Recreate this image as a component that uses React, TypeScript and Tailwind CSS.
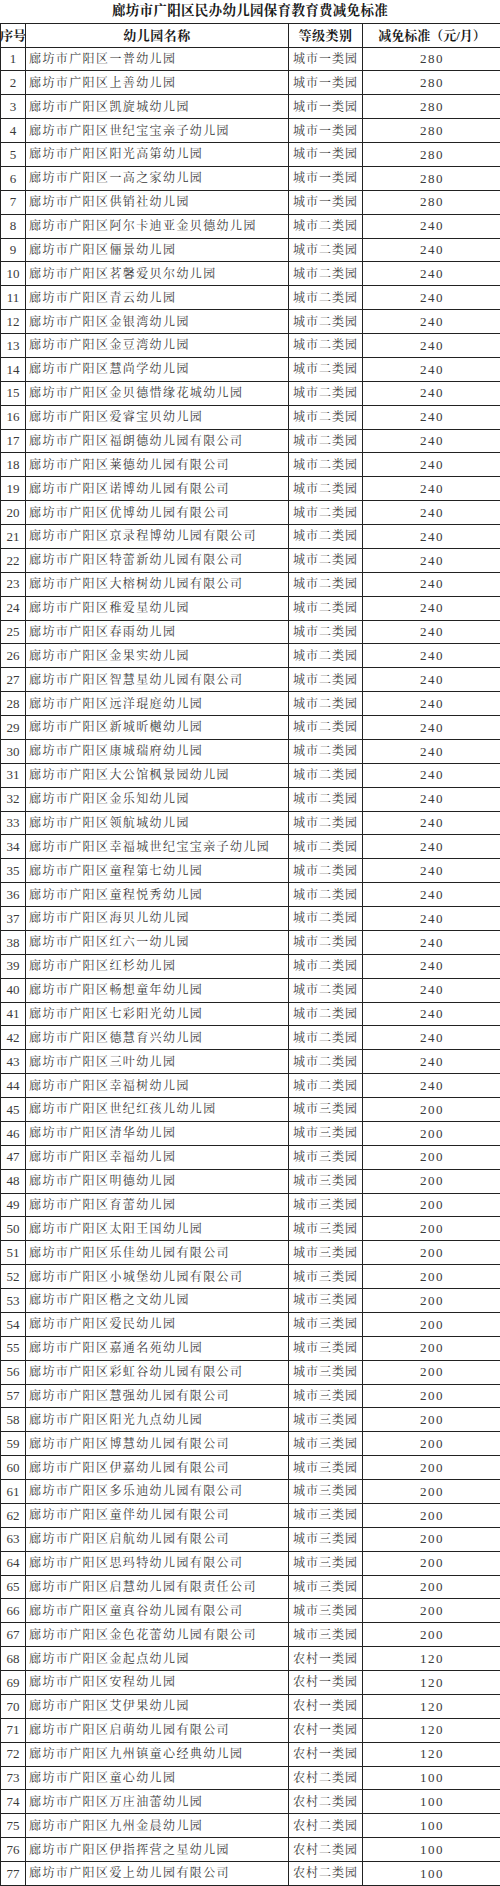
const rows: [string, string, number][] = [
  ["一普幼儿园", "城市一类园", 280],
  ["上善幼儿园", "城市一类园", 280],
  ["凯旋城幼儿园", "城市一类园", 280],
  ["世纪宝宝亲子幼儿园", "城市一类园", 280],
  ["阳光高第幼儿园", "城市一类园", 280],
  ["一高之家幼儿园", "城市一类园", 280],
  ["供销社幼儿园", "城市一类园", 280],
  ["阿尔卡迪亚金贝德幼儿园", "城市二类园", 240],
  ["俪景幼儿园", "城市二类园", 240],
  ["茗馨爱贝尔幼儿园", "城市二类园", 240],
  ["青云幼儿园", "城市二类园", 240],
  ["金银湾幼儿园", "城市二类园", 240],
  ["金豆湾幼儿园", "城市二类园", 240],
  ["慧尚学幼儿园", "城市二类园", 240],
  ["金贝德惜缘花城幼儿园", "城市二类园", 240],
  ["爱睿宝贝幼儿园", "城市二类园", 240],
  ["福朗德幼儿园有限公司", "城市二类园", 240],
  ["莱德幼儿园有限公司", "城市二类园", 240],
  ["诺博幼儿园有限公司", "城市二类园", 240],
  ["优博幼儿园有限公司", "城市二类园", 240],
  ["京录程博幼儿园有限公司", "城市二类园", 240],
  ["特蕾新幼儿园有限公司", "城市二类园", 240],
  ["大榕树幼儿园有限公司", "城市二类园", 240],
  ["稚爱星幼儿园", "城市二类园", 240],
  ["春雨幼儿园", "城市二类园", 240],
  ["金果实幼儿园", "城市二类园", 240],
  ["智慧星幼儿园有限公司", "城市二类园", 240],
  ["远洋琨庭幼儿园", "城市二类园", 240],
  ["新城昕樾幼儿园", "城市二类园", 240],
  ["康城瑞府幼儿园", "城市二类园", 240],
  ["大公馆枫景园幼儿园", "城市二类园", 240],
  ["金乐知幼儿园", "城市二类园", 240],
  ["领航城幼儿园", "城市二类园", 240],
  ["幸福城世纪宝宝亲子幼儿园", "城市二类园", 240],
  ["童程第七幼儿园", "城市二类园", 240],
  ["童程悦秀幼儿园", "城市二类园", 240],
  ["海贝儿幼儿园", "城市二类园", 240],
  ["红六一幼儿园", "城市二类园", 240],
  ["红杉幼儿园", "城市二类园", 240],
  ["畅想童年幼儿园", "城市二类园", 240],
  ["七彩阳光幼儿园", "城市二类园", 240],
  ["德慧育兴幼儿园", "城市二类园", 240],
  ["三叶幼儿园", "城市二类园", 240],
  ["幸福树幼儿园", "城市二类园", 240],
  ["世纪红孩儿幼儿园", "城市三类园", 200],
  ["清华幼儿园", "城市三类园", 200],
  ["幸福幼儿园", "城市三类园", 200],
  ["明德幼儿园", "城市三类园", 200],
  ["育蕾幼儿园", "城市三类园", 200],
  ["太阳王国幼儿园", "城市三类园", 200],
  ["乐佳幼儿园有限公司", "城市三类园", 200],
  ["小城堡幼儿园有限公司", "城市三类园", 200],
  ["楷之文幼儿园", "城市三类园", 200],
  ["爱民幼儿园", "城市三类园", 200],
  ["嘉通名苑幼儿园", "城市三类园", 200],
  ["彩虹谷幼儿园有限公司", "城市三类园", 200],
  ["慧强幼儿园有限公司", "城市三类园", 200],
  ["阳光九点幼儿园", "城市三类园", 200],
  ["博慧幼儿园有限公司", "城市三类园", 200],
  ["伊嘉幼儿园有限公司", "城市三类园", 200],
  ["多乐迪幼儿园有限公司", "城市三类园", 200],
  ["童伴幼儿园有限公司", "城市三类园", 200],
  ["启航幼儿园有限公司", "城市三类园", 200],
  ["思玛特幼儿园有限公司", "城市三类园", 200],
  ["启慧幼儿园有限责任公司", "城市三类园", 200],
  ["童真谷幼儿园有限公司", "城市三类园", 200],
  ["金色花蕾幼儿园有限公司", "城市三类园", 200],
  ["金起点幼儿园", "农村一类园", 120],
  ["安程幼儿园", "农村一类园", 120],
  ["艾伊果幼儿园", "农村一类园", 120],
  ["启萌幼儿园有限公司", "农村一类园", 120],
  ["九州镇童心经典幼儿园", "农村一类园", 120],
  ["童心幼儿园", "农村二类园", 100],
  ["万庄油蕾幼儿园", "农村二类园", 100],
  ["九州金晨幼儿园", "农村二类园", 100],
  ["伊指挥营之星幼儿园", "农村二类园", 100],
  ["爱上幼儿园有限公司", "农村二类园", 100],
];

const font = {
  fontFamily: '"Liberation Serif", "Noto Serif CJK SC", "Noto Sans CJK SC", serif',
};

export default function App() {
  return (
    <div className="w-[500px] overflow-hidden bg-white text-[#3a3a3a]" style={font}>
      {/* title */}
      <div className="flex h-[23px] items-center justify-center text-[13.5px] font-bold tracking-[0.3px] text-[#1a1a1a]">
        廊坊市广阳区民办幼儿园保育教育费减免标准
      </div>

      <div className="border-l border-t border-[#222]">
        {/* header */}
        <div className="grid h-[23.5px] grid-cols-[25px_263px_74px_138px] border-b border-[#222] text-[13px] font-bold text-[#1a1a1a]">
          <div className="flex items-center justify-center overflow-visible whitespace-nowrap border-r border-[#222]">
            序号
          </div>
          <div className="flex items-center justify-center border-r border-[#222] tracking-[0.5px]">
            幼儿园名称
          </div>
          <div className="flex items-center justify-center border-r border-[#222] tracking-[0.5px]">
            等级类别
          </div>
          <div className="flex items-center justify-center whitespace-nowrap">
            减免标准（元/月）
          </div>
        </div>

        {/* rows */}
        {rows.map(([name, level, fee], i) => (
          <div
            key={i}
            className="grid h-[23.88px] grid-cols-[25px_263px_74px_138px] border-b border-[#222] text-[12px]"
          >
            <div className="flex items-center justify-center border-r border-[#222] text-[13px]">
              {i + 1}
            </div>
            <div className="flex items-center whitespace-nowrap border-r border-[#222] pl-[3px] tracking-[1.4px]">
              廊坊市广阳区{name}
            </div>
            <div className="flex items-center whitespace-nowrap border-r border-[#222] pl-[4px] tracking-[1px]">
              {level}
            </div>
            <div className="flex items-center justify-center text-[13px] tracking-[1.5px]">
              {fee}
            </div>
          </div>
        ))}
      </div>
    </div>
  );
}
